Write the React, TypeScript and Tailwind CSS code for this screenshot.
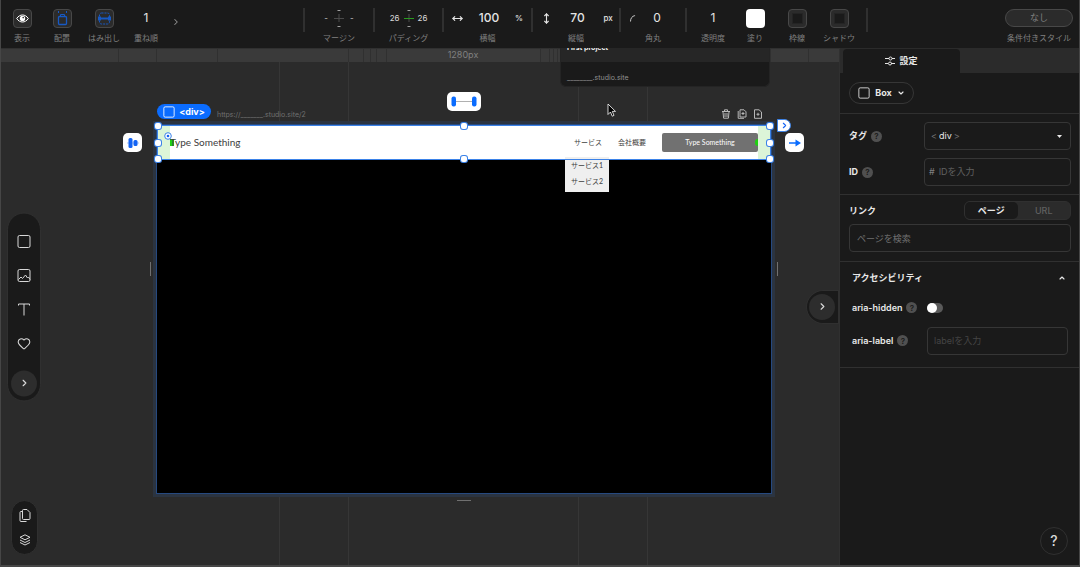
import type { ReactNode } from 'react'
import { ChevronDown, ChevronRight, ChevronUp, Heart, MoveHorizontal, MoveVertical } from 'lucide-react'

const GUIDES = ['20%', '31.25%', '68.75%', '80%']

const RULER_TICKS = [-38, 0, 61, 192, 207, 214, 220, 230, 384, 393, 397, 401, 491, 552, 614, 652]
const RULER_BASE = 614

const HANDLES = [
  '-left-[3px] -top-[3px]',
  'left-1/2 -ml-[3px] -top-[3px]',
  '-right-[3px] -top-[3px]',
  '-left-[3px] top-1/2 -mt-[3px]',
  '-right-[3px] top-1/2 -mt-[3px]',
  '-left-[3px] -bottom-[3px]',
  'left-1/2 -ml-[3px] -bottom-[3px]',
  '-right-[3px] -bottom-[3px]',
]

type ToolProps = {
  label: string
  className?: string
  children: ReactNode
}

function Tool({ label, className = 'w-[42px]', children }: ToolProps) {
  return (
    <label className={`flex shrink-0 flex-col items-center gap-1 ${className}`}>
      <span className="flex h-5 items-center justify-center">{children}</span>
      <span className="text-[8px] leading-3 whitespace-nowrap text-[#808080]">{label}</span>
    </label>
  )
}

function Divider() {
  return <div className="-mx-px h-6 w-0.5 shrink-0 bg-[#303030]" />
}

function NumberField({ value, className = 'w-6' }: { value: string; className?: string }) {
  return (
    <input
      type="text"
      defaultValue={value}
      className={`bg-transparent text-center text-xs text-[#e4e4e4] outline-none ${className}`}
    />
  )
}

function TileButton({ label, children }: { label: string; children?: ReactNode }) {
  return (
    <button
      aria-label={label}
      className="flex size-[19px] items-center justify-center rounded-[4px] border border-[#484848] bg-[#2b2b2b]"
    >
      {children}
    </button>
  )
}

function SpacingCross({ color }: { color: string }) {
  return (
    <svg width="10" height="18" viewBox="0 0 10 18" fill="none">
      <path d="M3.5 1.5h3M3.5 17.5h3" stroke="#a0a0a0" />
      <path d="M5 5v8" stroke="#4a4a4a" />
      <path d="M0 9.5h10" stroke={color} />
    </svg>
  )
}

function SquareIcon({ className = 'size-3.5' }: { className?: string }) {
  return (
    <svg viewBox="0 0 14 14" className={className} fill="none" stroke="currentColor">
      <rect x="1" y="1" width="12" height="12" rx="1.5" />
    </svg>
  )
}

function Help() {
  return (
    <button
      aria-label="ヘルプ"
      className="flex size-[11px] items-center justify-center rounded-full bg-[#505050] text-[8px] leading-none font-semibold text-[#1a1a1a]"
    >
      ?
    </button>
  )
}

function Toolbar() {
  return (
    <header className="flex h-12 shrink-0 bg-[#1a1a1a] pt-2">
      <div className="flex w-[303px] shrink-0 pl-px">
        <Tool label="表示" className="w-10">
          <TileButton label="表示">
            <svg width="13" height="9" viewBox="0 0 13 9">
              <path d="M.7 4.5C3.8-.2 9.2-.2 12.3 4.5 9.2 9.2 3.8 9.2.7 4.5Z" fill="none" stroke="#fff" />
              <circle cx="6.5" cy="4.5" r="2.7" fill="#fff" />
              <circle cx="7.2" cy="3.6" r=".8" fill="#2b2b2b" />
            </svg>
          </TileButton>
        </Tool>
        <Tool label="配置" className="w-10">
          <TileButton label="配置">
            <svg width="13" height="15" viewBox="0 0 13 15" fill="none" stroke="#1759c4">
              <rect x="2.5" y="5.5" width="8" height="8" rx="1" strokeWidth="1.3" />
              <path d="M2.5 0v2M10.5 0v2M4.5 5V3.500h4V5" />
            </svg>
          </TileButton>
        </Tool>
        <Tool label="はみ出し" className="w-11">
          <TileButton label="はみ出し">
            <svg width="13" height="13" viewBox="0 0 13 13" fill="none" stroke="#1759c4">
              <rect x="1.500" y="1" width="10" height="11" rx="2" strokeDasharray="2 1" />
              <path d="M0 4.500h3v4H0ZM10 4.500h3v4h-3ZM3 5.500h7v2H3Z" fill="#1759c4" stroke="none" />
            </svg>
          </TileButton>
        </Tool>
        <Tool label="重ね順" className="w-10">
          <NumberField value="1" />
        </Tool>
        <button aria-label="次へ" className="flex h-7 w-5 items-center justify-center text-[#909090]">
          <ChevronRight size={10} strokeWidth={2.5} />
        </button>
      </div>

      <Divider />
      <Tool label="マージン" className="w-[70px]">
        <span className="flex items-center gap-1.5 text-[8px] text-[#c8c8c8]">
          - <SpacingCross color="#4a4a4a" /> -
        </span>
      </Tool>
      <Divider />
      <Tool label="パディング" className="w-[69px]">
        <span className="flex items-center gap-1 text-[8px] text-[#d8d8d8]">
          26 <SpacingCross color="#2a9a20" /> 26
        </span>
      </Tool>
      <Divider />
      <Tool label="横幅" className="w-[89px]">
        <span className="flex items-center gap-3.5 text-[8px] font-medium text-[#e4e4e4]">
          <MoveHorizontal size={11} strokeWidth={2.5} />
          <NumberField value="100" />
          <span className="w-2 text-center">%</span>
        </span>
      </Tool>
      <Divider />
      <Tool label="縦幅" className="w-[88px]">
        <span className="flex items-center gap-3.5 text-[8px] font-medium text-[#e4e4e4]">
          <MoveVertical size={11} strokeWidth={2.5} />
          <NumberField value="70" />
          <span className="w-2 text-center">px</span>
        </span>
      </Tool>
      <Divider />
      <Tool label="角丸" className="w-[66px]">
        <span className="flex items-center gap-2 pr-2">
          <svg width="8" height="8" viewBox="0 0 8 8" fill="none" stroke="#c8c8c8">
            <path d="M1.5 7.5C1.5 4 3.5 1.5 7 1.5" strokeDasharray="8 1" />
          </svg>
          <NumberField value="0" />
        </span>
      </Tool>
      <Divider />
      <div className="flex w-[181px] shrink-0 pl-1.5">
        <Tool label="透明度">
          <NumberField value="1" />
        </Tool>
        <Tool label="塗り">
          <button aria-label="塗り" className="size-[19px] rounded-[4px] bg-white" />
        </Tool>
        <Tool label="枠線">
          <TileButton label="枠線">
            <span className="size-[11px] border border-[#242424] bg-[#1a1a1a]" />
          </TileButton>
        </Tool>
        <Tool label="シャドウ">
          <TileButton label="シャドウ">
            <span className="size-[11px] border border-[#242424] bg-[#1a1a1a]" />
          </TileButton>
        </Tool>
      </div>
      <Divider />
      <Tool label="条件付きスタイル" className="ml-auto w-20">
        <button className="h-[18px] w-[68px] rounded-full border border-[#484848] bg-[#2b2b2b] text-[9px] text-[#808080]">
          なし
        </button>
      </Tool>
    </header>
  )
}

function Ruler() {
  return (
    <div className="relative h-3.5 shrink-0 border-t border-[#303030] bg-[#3a3a3a] pr-[69px] pl-[155px]">
      <div className="relative h-full">
        {RULER_TICKS.map((tick) => (
          <span
            key={tick}
            className="absolute inset-y-0 w-px bg-[#303030]"
            style={{ left: `${(tick / RULER_BASE) * 100}%` }}
          />
        ))}
        <p className="text-center text-[9px] leading-3 text-[#808080]">1280px</p>
      </div>
    </div>
  )
}

function ProjectPopover() {
  return (
    <div className="absolute top-0 right-[69px] h-[39px] w-[210px] overflow-hidden rounded-b-md border border-t-0 border-[#242424] bg-[#1a1a1a] px-1.5">
      <div className="absolute inset-x-0 top-0 h-3.5 bg-[#262626]" />
      <div className="relative -mt-1.5 flex flex-col gap-[18px]">
        <p className="text-[7px] leading-3 font-bold text-[#f0f0f0]">First project</p>
        <p className="text-[7px] leading-3 text-[#909090]">________.studio.site</p>
      </div>
    </div>
  )
}

function PageIcon({ children }: { children: ReactNode }) {
  return (
    <svg width="10" height="10" viewBox="0 0 10 10" fill="none" stroke="#b8b8b8">
      {children}
    </svg>
  )
}

function FrameHeading() {
  return (
    <div className="flex h-[63px] shrink-0 items-end justify-between pb-1.5">
      <div className="flex items-end gap-1.5">
        <span className="flex h-[15px] w-[54px] items-center justify-center gap-1 rounded-full bg-[#0a6cff] text-[9px] font-bold text-white">
          <SquareIcon className="size-3" />
          &lt;div&gt;
        </span>
        <span className="text-[7px] leading-2 text-[#707070]">https://_______.studio.site/2</span>
      </div>
      <div className="flex gap-1.5 pr-2">
        <button aria-label="削除">
          <PageIcon>
            <path d="M1 2.5h8M3.5 2V.8h3V2M2 3l.6 6.2h4.8L8 3M4 4v4M6 4v4" />
          </PageIcon>
        </button>
        <button aria-label="複製">
          <PageIcon>
            <path d="M3 .8h4L9 2.800v5.200H3ZM4.500 4.500h3M6 3v3" />
            <path d="M1.200 2v7.300H7" />
          </PageIcon>
        </button>
        <button aria-label="追加">
          <PageIcon>
            <path d="M1.500.8H6L8.500 3v6.300h-7ZM3.500 5.300h3M5 3.800v3" />
          </PageIcon>
        </button>
      </div>
    </div>
  )
}

function Selection() {
  return (
    <div className="pointer-events-none absolute inset-0 border border-[#3b82e8]">
      {HANDLES.map((position) => (
        <span key={position} className={`absolute size-1.5 rounded-[2px] bg-white ring-1 ring-[#3b82e8] ${position}`} />
      ))}
      <span className="absolute -top-8.5 left-1/2 -ml-[17px] flex h-[19px] w-[34px] items-center justify-center rounded-[5px] bg-white">
        <svg width="26" height="11" viewBox="0 0 26 11">
          <path d="M3 5.500h20" stroke="#b0b0b0" />
          <rect x=".5" y=".5" width="4.500" height="10" rx="2" fill="#0a6cff" />
          <rect x="21" y=".5" width="4.500" height="10" rx="2" fill="#0a6cff" />
        </svg>
      </span>
      <span className="absolute top-[7px] -left-[35px] flex size-[19px] items-center justify-center rounded-[5px] bg-white">
        <svg width="12" height="10" viewBox="0 0 12 10" fill="#1464f4">
          <path d="M0 4.500h12v1H0Z" opacity=".4" />
          <rect x="1.500" width="4" height="10" rx="1.500" />
          <rect x="6.500" y="2" width="4" height="6" rx="1.500" />
        </svg>
      </span>
      <span className="absolute top-[7px] -right-[34px] flex size-[19px] items-center justify-center rounded-[5px] bg-white">
        <svg width="12" height="8" viewBox="0 0 12 8" fill="#0a6cff">
          <path d="M0 3.300h7V4.700H0ZM6.500.5 12 4 6.500 7.500Z" />
        </svg>
      </span>
      <span className="absolute -top-[7px] -right-[21px] flex h-[13px] w-3.5 items-center justify-center rounded-r-full rounded-l-[4px] border border-[#3b82e8] bg-white text-[#1464f4]">
        <ChevronRight size={9} strokeWidth={3} />
      </span>
      <svg width="8" height="8" viewBox="0 0 8 8" className="absolute top-1.5 left-1.5">
        <circle cx="4" cy="4" r="3.300" fill="#fff" stroke="#3b82e8" />
        <circle cx="4" cy="4" r="1.300" fill="#1464f4" />
      </svg>
    </div>
  )
}

function SitePreview() {
  return (
    <div className="relative flex-1 bg-black shadow-[0_0_0_1px_#26497f,0_0_0_4px_#2b3441]">
      <nav className="relative flex h-[35px] items-center justify-between border-x-[13px] border-[#dcf5d8] bg-white font-['Lato','Noto_Sans_CJK_JP',sans-serif] text-[#404040]">
        <span className="absolute top-3.5 left-0 h-[7px] w-1 bg-[#1fd011]" />
        <a href="#home" className="relative text-[10px]">
          Type Something
        </a>
        <div className="flex items-center gap-4 text-[7px]">
          <div className="relative">
            <a href="#service">サービス</a>
            <div className="absolute top-5 -left-[9px] flex h-[35px] w-11 flex-col items-center justify-center gap-1 bg-[#efefef] pb-1 leading-3">
              <a href="#service-1">サービス1</a>
              <a href="#service-2">サービス2</a>
            </div>
          </div>
          <a href="#company">会社概要</a>
          <button className="h-[19px] w-24 rounded-[2px] bg-[#717171] text-[7px] text-white">Type Something</button>
        </div>
        <span className="absolute top-3.5 right-0 h-[7px] w-[3px] rounded-l-full bg-[#1fd011]" />
      </nav>
      <div className="absolute inset-x-0 top-0 h-[35px]">
        <Selection />
      </div>
      <span className="absolute top-[137px] -left-[7px] h-3.5 w-px bg-[#707070]" />
      <span className="absolute top-[137px] -right-[7px] h-3.5 w-px bg-[#707070]" />
      <span className="absolute -bottom-2 left-1/2 -ml-[7px] h-px w-3.5 bg-[#707070]" />
    </div>
  )
}

function LeftTools() {
  return (
    <>
      <div className="absolute top-1/2 left-1.5 flex w-[34px] -translate-y-1/2 flex-col items-center gap-5 rounded-full border border-[#303030] bg-[#1a1a1a] pt-[21px] pb-1 text-[#d8d8d8]">
        <button aria-label="ボックス">
          <SquareIcon />
        </button>
        <button aria-label="画像">
          <svg width="14" height="14" viewBox="0 0 14 14" fill="none" stroke="currentColor" strokeLinejoin="round">
            <rect x="1" y="1" width="12" height="12" rx="1.500" />
            <path d="M1.500 11 4 8.500l1.500 1.500 3-3.500 2 3 1-1 1.500 2.500" />
          </svg>
        </button>
        <button aria-label="テキスト">
          <svg width="14" height="14" viewBox="0 0 14 14" fill="none" stroke="currentColor">
            <path d="M1.500 3v-1.500h11v1.500M7 1.500v11.500" />
          </svg>
        </button>
        <button aria-label="お気に入り">
          <Heart size={14} strokeWidth={1.8} />
        </button>
        <button aria-label="もっと見る" className="flex size-[26px] items-center justify-center rounded-full bg-[#2d2d2d]">
          <ChevronRight size={11} strokeWidth={2.5} />
        </button>
      </div>

      <div className="absolute bottom-2.5 left-2.5 flex w-[27px] flex-col items-center gap-3 rounded-full border border-[#303030] bg-[#1a1a1a] py-2 text-[#d8d8d8]">
        <button aria-label="ページ">
          <svg width="12" height="13" viewBox="0 0 12 13" fill="none" stroke="currentColor">
            <path d="M3.500 1.500a1 1 0 0 1 1-1H8L11 3.500v6a1 1 0 0 1-1 1H4.500a1 1 0 0 1-1-1Z" />
            <path d="M3.500 2.500H2a1 1 0 0 0-1 1v8a1 1 0 0 0 1 1h5.500" />
          </svg>
        </button>
        <button aria-label="レイヤー">
          <svg width="12" height="12" viewBox="0 0 12 12" fill="none" stroke="currentColor">
            <path d="M6 .8 11 3.300 6 5.800 1 3.300ZM1 6l5 2.500L11 6M1 8.500 6 11l5-2.500" />
          </svg>
        </button>
      </div>
    </>
  )
}

function Canvas() {
  return (
    <main className="relative flex min-w-0 flex-1 flex-col overflow-hidden bg-[#2b2b2b]">
      <Ruler />
      <div className="absolute top-3.5 right-[69px] bottom-0 left-[155px]">
        {GUIDES.map((left) => (
          <span key={left} className="absolute inset-y-0 w-px bg-[#363636]" style={{ left }} />
        ))}
      </div>
      <div className="relative flex flex-1 flex-col pr-[68px] pb-[72px] pl-[156px]">
        <FrameHeading />
        <SitePreview />
      </div>
      <ProjectPopover />
      <LeftTools />
      <div className="absolute top-1/2 right-0 flex h-[34px] w-[33px] -translate-y-1/2 items-center rounded-l-full rounded-r-[4px] border border-[#303030] bg-[#1a1a1a] pl-0.5">
        <button aria-label="パネルを閉じる" className="flex size-[26px] items-center justify-center rounded-full bg-[#2d2d2d] text-[#d8d8d8]">
          <ChevronRight size={11} strokeWidth={2.5} />
        </button>
      </div>
      <svg width="9" height="14" viewBox="0 0 9 14" className="absolute top-[55px] right-[223px]">
        <path d="M1 1v10.500L3.500 9l1.700 4.200 1.800-.8L5.300 8.400H8.500Z" fill="#000" stroke="#fff" strokeWidth=".8" />
      </svg>
    </main>
  )
}

function SettingsPanel() {
  return (
    <aside className="relative w-60 shrink-0 border-l border-[#303030] bg-[#1a1a1a] text-[9px] text-[#e8e8e8]">
      <div className="flex h-[25px] bg-[#2b2b2b] pt-px pl-[3px]">
        <button className="flex w-[117px] items-center justify-center gap-1 rounded-t-[4px] bg-[#1a1a1a] font-bold">
          <svg width="10" height="10" viewBox="0 0 10 10" fill="none" stroke="currentColor">
            <path d="M0 2.500h4M7 2.500h3M0 7.500h3M6 7.500h4" />
            <circle cx="5.500" cy="2.500" r="1.500" />
            <circle cx="5" cy="7.500" r="1.500" />
          </svg>
          設定
        </button>
      </div>

      <div className="px-[9px] py-[9px]">
        <button className="flex h-[22px] w-[65px] items-center justify-between rounded-full border border-[#363636] px-2 text-[9px] font-bold">
          <SquareIcon className="size-3" />
          Box
          <ChevronDown size={8} strokeWidth={3.5} />
        </button>
      </div>

      <div className="flex flex-col gap-2 border-t border-[#303030] py-2 pr-2 pl-[9px]">
        <div className="flex items-center justify-between">
          <div className="flex items-center gap-1">
            <label htmlFor="tag" className="font-bold">タグ</label>
            <Help />
          </div>
          <div className="flex h-7 w-[147px] items-center gap-0.5 rounded-[4px] border border-[#363636] px-1.5">
            <span className="text-[#707070]">&lt;</span>
            <select id="tag" className="appearance-none bg-transparent [field-sizing:content]">
              <option>div</option>
            </select>
            <span className="text-[#707070]">&gt;</span>
            <svg width="5" height="3" viewBox="0 0 5 3" className="mr-0.5 ml-auto">
              <path d="M0 0h5L2.500 3Z" fill="#e8e8e8" />
            </svg>
          </div>
        </div>
        <div className="flex items-center justify-between">
          <div className="flex items-center gap-1">
            <label htmlFor="element-id" className="font-bold">ID</label>
            <Help />
          </div>
          <div className="flex h-7 w-[147px] items-center gap-1 rounded-[4px] border border-[#363636] px-1">
            <span className="text-[#808080]">#</span>
            <input id="element-id" placeholder="IDを入力" className="min-w-0 flex-1 bg-transparent outline-none placeholder:text-[#606060]" />
          </div>
        </div>
      </div>

      <div className="flex flex-col gap-1 border-t border-[#303030] pt-1.5 pr-2 pb-[9px] pl-[9px]">
        <div className="flex items-center justify-between">
          <label htmlFor="link" className="font-bold">リンク</label>
          <div className="flex h-[19px] w-[107px] rounded-md border border-[#303030] bg-[#2b2b2b]">
            <button className="flex-1 rounded-[5px] bg-[#1a1a1a] font-bold">ページ</button>
            <button className="flex-1 font-medium text-[#606060]">URL</button>
          </div>
        </div>
        <input
          id="link"
          placeholder="ページを検索"
          className="h-7 w-full rounded-[4px] border border-[#363636] bg-transparent px-[7px] outline-none placeholder:text-[#707070]"
        />
      </div>

      <section className="border-y border-[#303030] pt-[9px] pr-[11px] pb-3 pl-3">
        <button className="flex w-full items-center justify-between pr-0.5 text-left font-bold">
          アクセシビリティ
          <ChevronUp size={8} strokeWidth={3.5} />
        </button>
        <div className="mt-[15px] flex h-4 items-center gap-2">
          <div className="flex items-center gap-1">
            <label htmlFor="aria-hidden" className="font-semibold">aria-hidden</label>
            <Help />
          </div>
          <input
            id="aria-hidden"
            type="checkbox"
            className="ml-0.5 h-2.5 w-4 appearance-none rounded-full bg-[#5a5a5a] before:block before:size-2.5 before:rounded-full before:bg-white checked:before:ml-1.5"
          />
        </div>
        <div className="mt-[11px] flex items-center justify-between">
          <div className="flex items-center gap-1">
            <label htmlFor="aria-label" className="font-semibold">aria-label</label>
            <Help />
          </div>
          <input
            id="aria-label"
            placeholder="labelを入力"
            className="h-7 w-[141px] rounded-[4px] border border-[#363636] bg-transparent px-1.5 outline-none placeholder:text-[#454545]"
          />
        </div>
      </section>

      <button
        aria-label="サポート"
        className="absolute right-[11px] bottom-2.5 size-7 rounded-full border border-[#303030] text-sm font-medium text-[#d8d8d8]"
      >
        ?
      </button>
    </aside>
  )
}

export default function App() {
  return (
    <div className="flex min-h-screen flex-col border-x border-b-2 border-[#464646] bg-[#1a1a1a] font-['Inter','Noto_Sans_CJK_JP',sans-serif]">
      <Toolbar />
      <div className="flex flex-1">
        <Canvas />
        <SettingsPanel />
      </div>
    </div>
  )
}
